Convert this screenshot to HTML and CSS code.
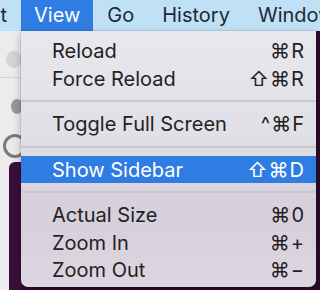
FILE: index.html
```html
<!DOCTYPE html>
<html lang="en">
<head>
  <meta charset="UTF-8" />
  <title>View menu</title>
  <link rel="stylesheet" href="styles.css">
</head>
<body>
  <div class="screen">
    <div class="menubar">
      <span class="bar-item cut">t</span>
      <span class="bar-item active">View</span>
      <span class="bar-item">Go</span>
      <span class="bar-item">History</span>
      <span class="bar-item">Window</span>
    </div>

    <div class="desk">
      <div class="side">
        <div class="dot"></div>
        <div class="rule"></div>
        <div class="dot small"></div>
        <div class="ring"></div>
        <div class="purple"></div>
      </div>
    </div>

    <div class="menu">
      <div class="item"><span>Reload</span><span class="keys">⌘R</span></div>
      <div class="item"><span>Force Reload</span><span class="keys">⇧⌘R</span></div>
      <div class="sep"></div>
      <div class="item"><span>Toggle Full Screen</span><span class="keys">^⌘F</span></div>
      <div class="sep"></div>
      <div class="item selected"><span>Show Sidebar</span><span class="keys">⇧⌘D</span></div>
      <div class="sep"></div>
      <div class="item"><span>Actual Size</span><span class="keys">⌘0</span></div>
      <div class="item"><span>Zoom In</span><span class="keys">⌘+</span></div>
      <div class="item"><span>Zoom Out</span><span class="keys">⌘−</span></div>
    </div>
  </div>
</body>
</html>
```

FILE: styles.css
```css
body {
  margin: 0;
  font-family: Inter, "Liberation Sans", sans-serif;
  color: #222;
}
.screen {
  position: relative;
  width: 320px;
  height: 290px;
  overflow: hidden;
  background: #2c0b2c;
}
.menubar {
  display: flex;
  height: 31px;
  background: #bfe0f5;
  font-size: 20px;
  line-height: 31px;
  white-space: nowrap;
}
.bar-item {
  padding: 0 14px;
  color: #1a2a36;
}
.bar-item.cut {
  flex: 0 0 21px;
  box-sizing: border-box;
  padding: 0 14px 0 0;
  text-align: right;
}
.bar-item.active {
  background: #2f7de2;
  color: #fff;
  padding: 0 13px;
}
.desk {
  height: 259px;
  display: flex;
}
.side {
  width: 22px;
  background: #ececec;
  display: flex;
  flex-direction: column;
  align-items: center;
}
.dot {
  width: 16px;
  height: 17px;
  border-radius: 50%;
  background: #d4d4d4;
  margin-top: 20px;
  margin-left: 6px;
}
.dot.small {
  margin-top: 21px;
  margin-left: 12px;
  width: 12px;
  height: 15px;
  background: #999;
}
.rule {
  align-self: stretch;
  height: 1px;
  background: #d6d6d6;
  margin-top: 9px;
}
.ring {
  width: 18px;
  height: 18px;
  border: 3px solid #7a7a7a;
  border-radius: 50%;
  margin-top: 20px;
  margin-left: 8px;
}
.purple {
  flex: 1;
  align-self: stretch;
  margin-top: 4px;
  margin-left: 9px;
  background: #3a0e3b;
  border-radius: 6px 0 0 0;
}
.menu {
  position: absolute;
  left: 21px;
  top: 31px;
  width: 295px;
  height: 256px;
  padding-top: 6px;
  box-sizing: border-box;
  background: linear-gradient(#e7e7ec 0%, #e1e0e6 40%, #d6cfdc 70%, #dcd6e0 100%);
  border-radius: 0 0 7px 7px;
  box-shadow: 0 0 0 1px rgba(0, 0, 0, 0.08), 0 4px 10px rgba(0, 0, 0, 0.25);
  font-size: 20px;
}
.item {
  display: flex;
  justify-content: space-between;
  height: 27.5px;
  line-height: 28px;
  padding: 0 11px 0 31px;
}
.item.selected {
  background: #2f7de2;
  color: #fff;
}
.keys {
  letter-spacing: 1px;
}
.sep {
  height: 2px;
  background: #c9c8d0;
  margin: 8px 0;
}
```
